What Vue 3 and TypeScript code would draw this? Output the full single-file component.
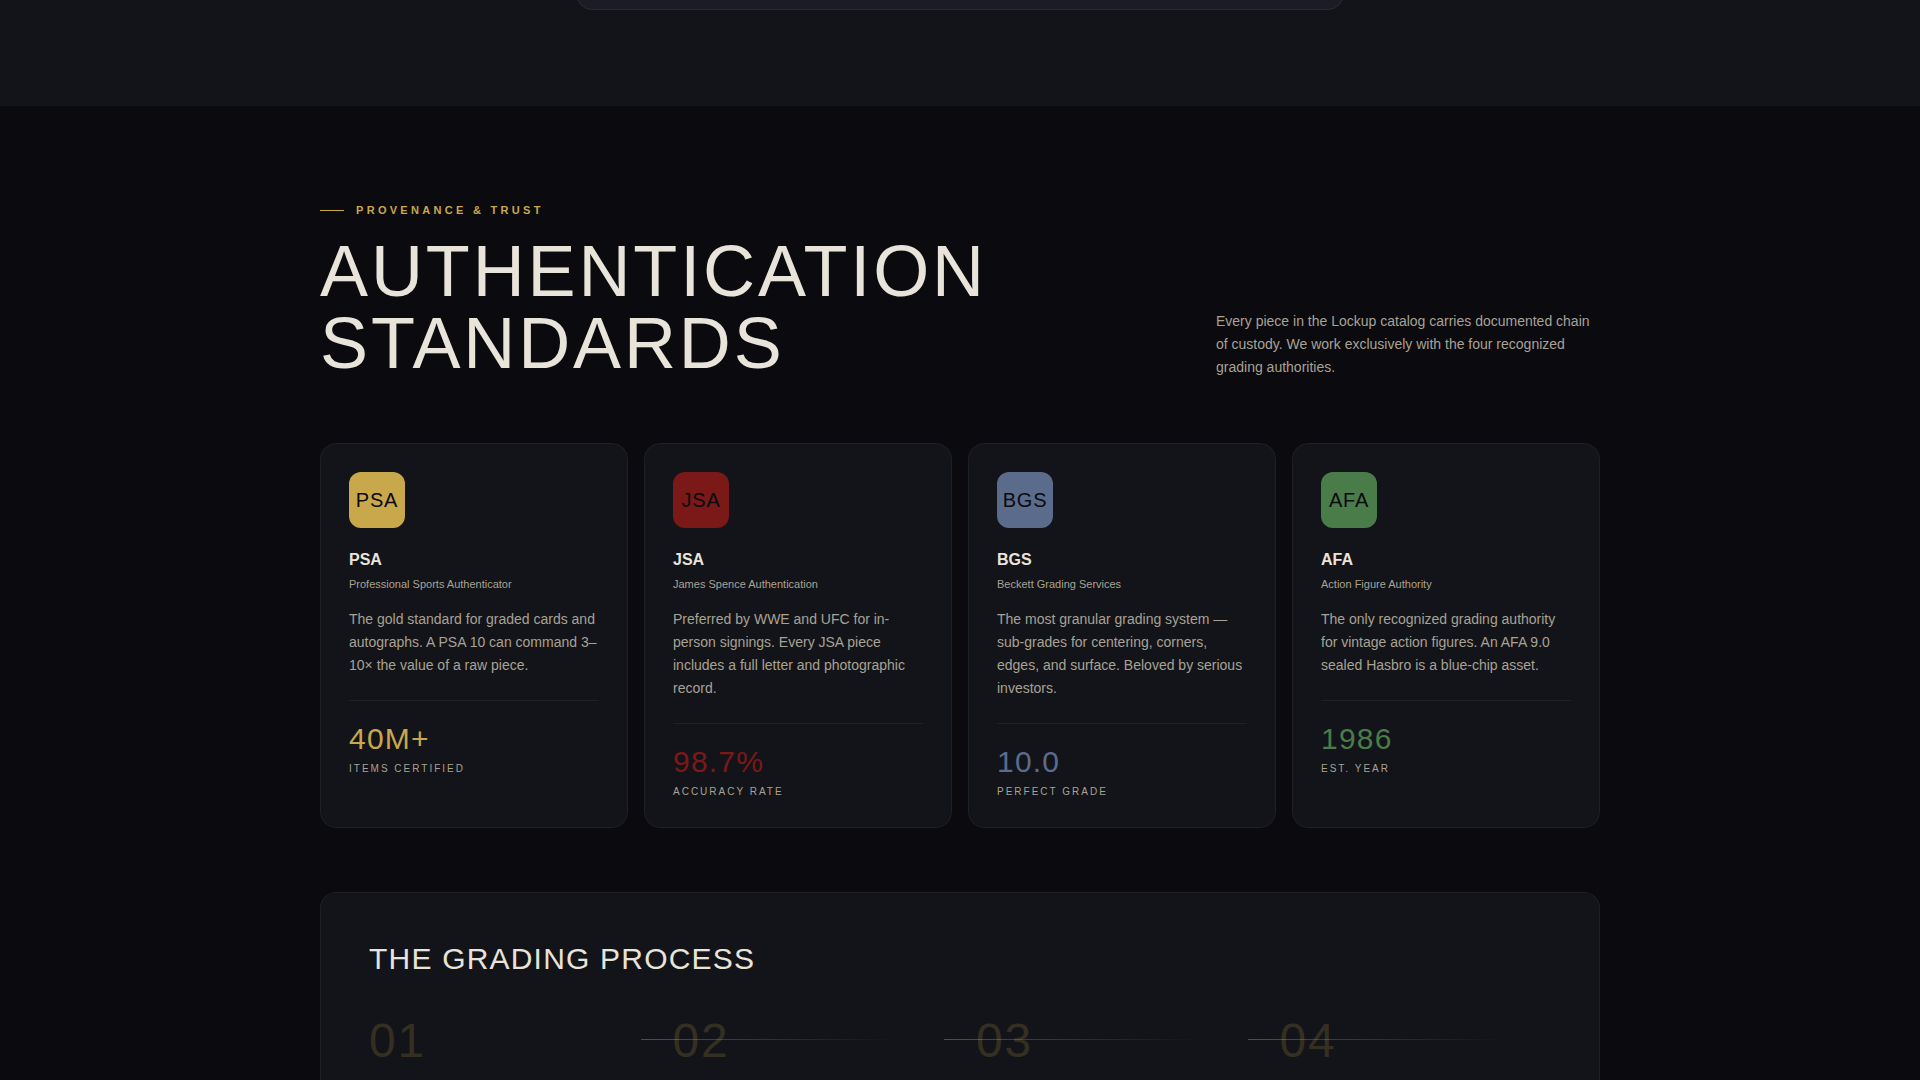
<script setup lang="ts">
interface Authority {
  code: string
  fullName: string
  description: string
  stat: string
  statLabel: string
  color: string
}

const authorities: Authority[] = [
  {
    code: 'PSA',
    fullName: 'Professional Sports Authenticator',
    description: 'The gold standard for graded cards and autographs. A PSA 10 can command 3–10× the value of a raw piece.',
    stat: '40M+',
    statLabel: 'Items Certified',
    color: '#c9a84c',
  },
  {
    code: 'JSA',
    fullName: 'James Spence Authentication',
    description: 'Preferred by WWE and UFC for in-person signings. Every JSA piece includes a full letter and photographic record.',
    stat: '98.7%',
    statLabel: 'Accuracy Rate',
    color: '#7b1818',
  },
  {
    code: 'BGS',
    fullName: 'Beckett Grading Services',
    description: 'The most granular grading system — sub-grades for centering, corners, edges, and surface. Beloved by serious investors.',
    stat: '10.0',
    statLabel: 'Perfect Grade',
    color: '#5b6b8c',
  },
  {
    code: 'AFA',
    fullName: 'Action Figure Authority',
    description: 'The only recognized grading authority for vintage action figures. An AFA 9.0 sealed Hasbro is a blue-chip asset.',
    stat: '1986',
    statLabel: 'Est. Year',
    color: '#4a7c4a',
  },
]

const steps: string[] = ['01', '02', '03', '04']
</script>

<template>
  <div class="page">
    <section class="previous">
      <div class="previous-panel"></div>
    </section>

    <main class="standards">
      <header class="intro">
        <div class="intro-title">
          <p class="eyebrow">Provenance &amp; Trust</p>
          <h2 class="title">Authentication<br />Standards</h2>
        </div>
        <p class="lead">
          Every piece in the Lockup catalog carries documented chain of custody. We work exclusively with the four
          recognized grading authorities.
        </p>
      </header>

      <div class="cards">
        <article v-for="a in authorities" :key="a.code" class="card">
          <div class="badge" :style="{ backgroundColor: a.color }">{{ a.code }}</div>
          <h3 class="name">{{ a.code }}</h3>
          <p class="full-name">{{ a.fullName }}</p>
          <p class="description">{{ a.description }}</p>
          <div class="stat">
            <div class="stat-value" :style="{ color: a.color }">{{ a.stat }}</div>
            <div class="stat-label">{{ a.statLabel }}</div>
          </div>
        </article>
      </div>

      <section class="process">
        <h3 class="process-title">The Grading Process</h3>
        <ol class="steps">
          <li v-for="step in steps" :key="step" class="step">
            <span class="step-number">{{ step }}</span>
          </li>
        </ol>
      </section>
    </main>
  </div>
</template>

<style>
body {
  margin: 0;
  background: #0a0a0f;
}
</style>

<style scoped>
.page {
  display: flex;
  flex-direction: column;
  height: 100vh;
  overflow: hidden;
  background: #0a0a0f;
  color: #e8e4da;
  font-family: "Liberation Sans", Arial, sans-serif;
}

h2,
h3,
p,
ol {
  margin: 0;
  padding: 0;
}

.page * {
  box-sizing: border-box;
}

.previous {
  flex: none;
  padding: 0 24px 96px;
  overflow: hidden;
  background: #131419;
}

.previous-panel {
  max-width: 768px;
  height: 40px;
  margin: -30px auto 0;
  border: 1px solid #2a2a33;
  border-radius: 16px;
  background: #1c1c26;
}

.standards {
  flex: 1;
  display: flex;
  flex-direction: column;
  width: 100%;
  max-width: 1328px;
  margin: 0 auto;
  padding: 96px 24px 0;
}

.intro {
  display: flex;
  align-items: flex-end;
  justify-content: space-between;
  gap: 32px;
  margin-bottom: 64px;
}

.eyebrow {
  display: flex;
  align-items: center;
  gap: 12px;
  margin-bottom: 16px;
  color: #c9a84c;
  font-size: 11px;
  font-weight: 700;
  line-height: 17px;
  letter-spacing: 0.3em;
  text-transform: uppercase;
}

.eyebrow::before {
  content: "";
  width: 24px;
  height: 1px;
  background: #c9a84c;
}

.title {
  font-size: 72px;
  font-weight: 400;
  line-height: 72px;
  letter-spacing: 0.04em;
  text-transform: uppercase;
}

.lead {
  width: 384px;
  color: #a8a294;
  font-size: 14px;
  line-height: 23px;
}

.cards {
  display: grid;
  grid-template-columns: repeat(4, 1fr);
  gap: 16px;
  margin-bottom: 64px;
}

.card {
  padding: 28px;
  border: 1px solid #1f2024;
  border-radius: 16px;
  background: #131419;
}

.badge {
  display: flex;
  align-items: center;
  justify-content: center;
  width: 56px;
  height: 56px;
  margin-bottom: 20px;
  border-radius: 12px;
  color: #0a0a0f;
  font-size: 20px;
  letter-spacing: 0.04em;
}

.name {
  margin-bottom: 4px;
  font-size: 16px;
  font-weight: 700;
  line-height: 24px;
}

.full-name {
  margin-bottom: 16px;
  color: #a8a294;
  font-size: 11px;
  line-height: 16px;
}

.description {
  margin-bottom: 23px;
  color: #a8a294;
  font-size: 14px;
  line-height: 23px;
}

.stat {
  padding-top: 20px;
  border-top: 1px solid #1f2024;
}

.stat-value {
  margin-bottom: 4px;
  font-size: 30px;
  line-height: 36px;
  letter-spacing: 0.04em;
}

.stat-label {
  color: #a8a294;
  font-size: 10px;
  line-height: 15px;
  letter-spacing: 0.2em;
  text-transform: uppercase;
}

.process {
  flex: 1;
  padding: 48px;
  border: 1px solid #1f2024;
  border-bottom: 0;
  border-radius: 16px 16px 0 0;
  background: #131419;
}

.process-title {
  margin-bottom: 40px;
  font-size: 30px;
  font-weight: 400;
  line-height: 36px;
  letter-spacing: 0.04em;
  text-transform: uppercase;
}

.steps {
  display: grid;
  grid-template-columns: repeat(4, 1fr);
  gap: 32px;
  list-style: none;
}

.step {
  position: relative;
}

.step-number {
  display: block;
  color: rgba(201, 168, 76, 0.2);
  font-size: 48px;
  line-height: 48px;
  letter-spacing: 0.04em;
}

/* Connector from the end of one step across the next */
.step:not(:last-child)::after {
  content: "";
  position: absolute;
  top: 22px;
  left: 100%;
  width: calc(100% - 16px);
  height: 1px;
  background: linear-gradient(to right, rgba(201, 168, 76, 0.4), transparent);
}
</style>
